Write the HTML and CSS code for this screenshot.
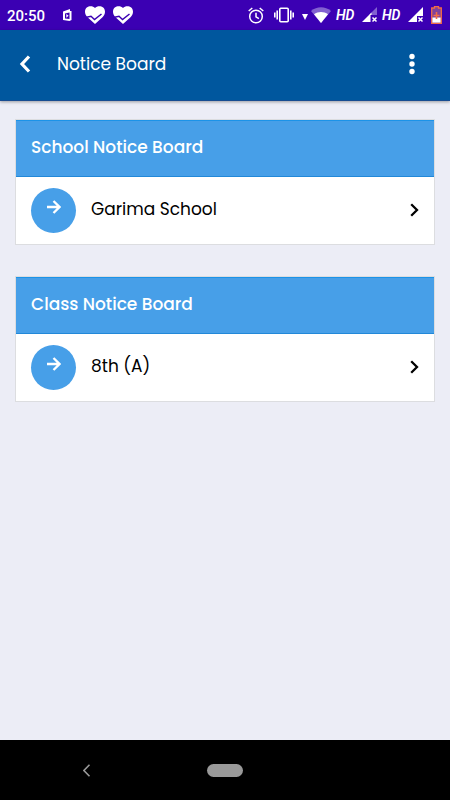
FILE: index.html
```html
<!DOCTYPE html>
<html lang="en">
<head>
    <meta charset="UTF-8">
    <meta name="viewport" content="width=device-width, initial-scale=1.0">
    <title>Notice Board</title>
    <link rel="stylesheet" href="styles.css">
</head>
<body>
    <div class="status-bar">
        <div class="status-left">
            <span class="time">20:50</span>
            <svg class="app-icon" width="10" height="12" viewBox="0 0 10 12"><path fill="#fff" fill-rule="evenodd" d="M0 2.500L7 0v2h1.500v9L6.500 12 0 11zM2 4.500v5l4.500.5V3.500z"/><path fill="#fff" d="M3.300 5l2.300 1.800-2.300 2z"/></svg>
            <svg class="heart" width="20" height="18" viewBox="0 0 20 18"><path fill="#fff" d="M10 2C7-1 0 0 0 5.800 0 8 1 9.700 2.500 11.200L10 18l7.500-6.800C19 9.700 20 8 20 5.800 20 0 13-1 10 2z"/><path fill="none" stroke="#3b00b3" stroke-width="1.500" d="M1.500 11.300l4.500-1 3.500 3.200 7-5.500"/></svg>
            <svg class="heart" width="20" height="18" viewBox="0 0 20 18"><path fill="#fff" d="M10 2C7-1 0 0 0 5.800 0 8 1 9.700 2.500 11.200L10 18l7.500-6.800C19 9.700 20 8 20 5.800 20 0 13-1 10 2z"/><path fill="none" stroke="#3b00b3" stroke-width="1.500" d="M1.500 11.300l4.500-1 3.500 3.200 7-5.500"/></svg>
        </div>
        <div class="status-right">
            <svg class="alarm" width="16" height="17" viewBox="0 0 16 17" fill="none" stroke="#fff" stroke-width="1.500"><circle cx="8" cy="9.500" r="6.300"/><path d="M.7 4L4.300 1M15.300 4l-3.600-3M8 5.800v4l2.900 1.800"/></svg>
            <svg class="vibrate" width="20" height="16" viewBox="0 0 20 16" fill="none" stroke="#fff" stroke-width="1.600"><rect x="5.800" y="1.300" width="8.400" height="13.400" rx="1"/><path d="M.8 5.500v5M3.200 3.500v9M16.800 3.500v9M19.200 5.500v5"/></svg>
            <svg class="data" width="6" height="6" viewBox="0 0 6 6"><path fill="#fff" d="M0 0h6L3 6z"/></svg>
            <svg class="wifi" width="20" height="16" viewBox="0 0 20 16"><path fill="#8261d0" d="M0 4c6-5 14-5 20 0L10 16z"/><path fill="#fff" d="M3 7.200c4-3 10-3 14 0L10 16z"/></svg>
            <span class="hd">HD</span>
            <svg class="signal" width="16" height="16" viewBox="0 0 16 16"><path fill="#8261d0" d="M15 0v8H7z"/><path fill="#fff" d="M0 15L9.500 5.500V15z"/><path fill="#3b00b3" d="M8.500 8H16v8H8.500z"/><path stroke="#fff" stroke-width="1.500" d="M10.500 10.500l4 4m0-4l-4 4"/></svg>
            <span class="hd">HD</span>
            <svg class="signal" width="16" height="16" viewBox="0 0 16 16"><path fill="#fff" d="M0 15L15 0v15z"/><path fill="#3b00b3" d="M9 9h7v7H9z"/><path stroke="#fff" stroke-width="1.500" d="M10.500 10.500l4 4m0-4l-4 4"/></svg>
            <svg class="battery" width="11" height="18" viewBox="0 0 11 18"><path fill="#80429c" stroke="#f36c45" stroke-width="1.300" d="M3.500 2V.7h4V2h2.800v15.300H.7V2z"/><path fill="#fff" d="M1.400 11.500h8.200v5.100H1.400z"/><path stroke="#f36c45" stroke-width="1.600" d="M5.500 6v7M2.500 9.500h6"/></svg>
        </div>
    </div>

    <header class="app-bar">
        <svg class="back" width="12" height="18" viewBox="0 0 12 18"><path fill="none" stroke="#fff" stroke-width="3.200" d="M10 1.500L3 9l7 7.500"/></svg>
        <h1>Notice Board</h1>
        <svg class="more" width="6" height="22" viewBox="0 0 6 22" fill="#fff"><circle cx="3" cy="3.500" r="2.700"/><circle cx="3" cy="11" r="2.700"/><circle cx="3" cy="18.500" r="2.700"/></svg>
    </header>

    <main>
        <section class="card">
            <h2>School Notice Board</h2>
            <div class="row">
                <span class="circle"><svg width="14" height="14" viewBox="0 0 14 14"><path fill="none" stroke="#fff" stroke-width="2.300" d="M0 7h12.500M6.500 1l6 6-6 6"/></svg></span>
                <span class="name">Garima School</span>
                <svg class="chevron" width="9" height="14" viewBox="0 0 9 14"><path fill="none" stroke="#000" stroke-width="2.300" d="M1.200 1.200L7 7l-5.800 5.800"/></svg>
            </div>
        </section>
        <section class="card">
            <h2>Class Notice Board</h2>
            <div class="row">
                <span class="circle"><svg width="14" height="14" viewBox="0 0 14 14"><path fill="none" stroke="#fff" stroke-width="2.300" d="M0 7h12.500M6.500 1l6 6-6 6"/></svg></span>
                <span class="name">8th (A)</span>
                <svg class="chevron" width="9" height="14" viewBox="0 0 9 14"><path fill="none" stroke="#000" stroke-width="2.300" d="M1.200 1.200L7 7l-5.800 5.800"/></svg>
            </div>
        </section>
    </main>

    <nav class="nav-bar">
        <svg class="nav-back" width="8" height="13" viewBox="0 0 8 13"><path fill="none" stroke="#999" stroke-width="1.600" d="M6.500 .8L.9 6.500l5.600 5.700"/></svg>
        <span class="home"></span>
    </nav>
</body>
</html>
```

FILE: styles.css
```css
* {
    box-sizing: border-box;
}
body {
    margin: 0;
    height: 100vh;
    display: flex;
    flex-direction: column;
    background-color: #ecedf6;
    font-family: Poppins, Inter, sans-serif;
    overflow: hidden;
}
svg {
    display: block;
    flex-shrink: 0;
}

/* status bar */
.status-bar {
    height: 30px;
    background-color: #3b00b3;
    color: #fff;
    display: flex;
    justify-content: space-between;
    padding: 0 8px 0 7px;
    font-family: Roboto, sans-serif;
}
.status-left, .status-right {
    display: flex;
    align-items: center;
}
.time {
    width: 56px;
    font-size: 15px;
    font-weight: 500;
    line-height: 30px;
    padding-top: 1px;
}
.app-icon {
    margin-right: 12px;
}
.heart {
    margin-right: 8px;
}
.alarm {
    margin-right: 10px;
}
.vibrate {
    margin-right: 8px;
}
.data {
    margin: 3px 3px 0 0;
}
.wifi {
    margin-right: 5px;
}
.hd {
    width: 26px;
    font-size: 14px;
    font-weight: 600;
    font-style: italic;
    line-height: 30px;
}
.signal {
    margin-right: 4px;
}
.signal:nth-last-child(2) {
    margin-right: 7px;
}

/* header */
.app-bar {
    height: 71px;
    background-color: #00579e;
    border-bottom: 1px solid #174c91;
    box-shadow: 0 1px 3px rgba(0, 0, 0, 0.35);
    display: flex;
    align-items: center;
    padding: 0 35px 2px 19px;
}
.app-bar h1 {
    margin: 0 auto 0 26px;
    color: #fff;
    font-size: 17px;
    font-weight: 400;
    line-height: 26px;
}

/* notice cards */
main {
    flex: 1;
    padding: 18px 15px 0;
}
.card {
    height: 126px;
    margin-bottom: 31px;
    background-color: #fff;
    border: 1px solid #dcdde0;
}
.card h2 {
    height: 57px;
    margin: 0;
    padding: 0 15px 2px;
    background-color: #479fe8;
    border-top: 1px solid #1c93e8;
    border-bottom: 1px solid #2288d8;
    color: #fff;
    font-size: 17px;
    font-weight: 500;
    line-height: 52px;
}
.row {
    height: 67px;
    display: flex;
    align-items: center;
    padding: 0 15px;
}
.circle {
    width: 45px;
    height: 45px;
    border-radius: 50%;
    background-color: #479fe8;
    display: flex;
    justify-content: center;
    padding-top: 12px;
}
.name {
    margin: 0 auto 3px 15px;
    color: #000;
    font-size: 17px;
    font-weight: 400;
}
.chevron {
    margin-bottom: 2px;
}

/* android navigation */
.nav-bar {
    height: 60px;
    background-color: #000;
    display: flex;
    align-items: center;
    padding-left: 83px;
}
.home {
    width: 36px;
    height: 13px;
    margin-left: 116px;
    border-radius: 7px;
    background-color: #999;
}
```
